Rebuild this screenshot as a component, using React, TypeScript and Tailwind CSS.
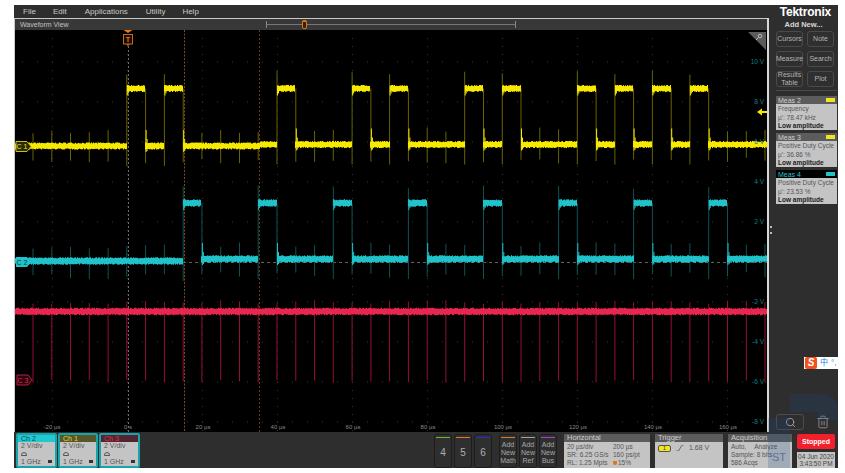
import { Search, Trash2 } from "lucide-react";
import React from "react";

// seeded noise so every render draws the same trace
let seed = 7;
const rnd = () => {
  seed = (seed * 16807) % 2147483647;
  return seed / 2147483647;
};

const X0 = 33;
const STEP = 18.77;
const stepX = (k: number) => X0 + STEP * k;

const buildTrace = (highs: number[], high: number, low: (x: number) => number, fuzz: number) => {
  let bright = "";
  let dim = "";
  const isHigh = (x: number) => highs.some((k) => x >= stepX(k) && x < stepX(k + 1) - 0.5);
  for (let x = 15.5; x < 767; x += 1) {
    const base = isHigh(x) ? high : low(x);
    const up = fuzz + rnd() * 1.2;
    const down = fuzz + rnd() * 1.2;
    bright += `M${x} ${(base - up).toFixed(1)}V${(base + down).toFixed(1)}`;
  }
  for (let k = 0; k < 40; k++) {
    const x = stepX(k);
    if (x > 767) break;
    const wasHigh = highs.includes(k - 1);
    const nowHigh = highs.includes(k);
    if (nowHigh) {
      const top = high - 14 - rnd() * 4;
      dim += `M${x.toFixed(1)} ${top.toFixed(1)}V${(low(x) + 20).toFixed(1)}`;
      bright += `M${(x + 0.5).toFixed(1)} ${(high - 3).toFixed(1)}V${(high + 7).toFixed(1)}M${(x + 1.5).toFixed(1)} ${(high - 3).toFixed(1)}V${(high + 5).toFixed(1)}`;
    } else if (wasHigh) {
      dim += `M${x.toFixed(1)} ${high.toFixed(1)}V${(low(x) + 14 + rnd() * 4).toFixed(1)}`;
      bright += `M${(x + 0.5).toFixed(1)} ${(low(x) - 16).toFixed(1)}V${(low(x) + 6).toFixed(1)}M${(x + 1.5).toFixed(1)} ${(low(x) - 7).toFixed(1)}V${(low(x) + 5).toFixed(1)}`;
    } else {
      const l = low(x);
      dim += `M${x.toFixed(1)} ${(l - 12 - rnd() * 5).toFixed(1)}V${(l + 13 + rnd() * 6).toFixed(1)}`;
    }
  }
  return { bright, dim };
};

const yellow = buildTrace([5, 7, 13, 17, 19, 23, 25, 29, 31, 33, 35], 88.5, (x) => (x < 260 ? 146 : 144.5), 2.4);
const teal = buildTrace([8, 12, 16, 20, 24, 28, 32, 36], 203, (x) => (x < 184 ? 261 : 259), 2.6);

let redBand = "";
for (let x = 15.5; x < 767; x += 1) {
  redBand += `M${x} ${(311.5 - 2.6 - rnd() * 1.2).toFixed(1)}V${(311.5 + 2.6 + rnd() * 1.2).toFixed(1)}`;
}
let redSpikes = "";
for (let k = 0; k < 40; k++) {
  const x = stepX(k);
  if (x < 767) redSpikes += `M${x.toFixed(1)} ${(300 + rnd() * 4).toFixed(1)}V${(380 + rnd() * 3).toFixed(1)}`;
}

let gridDots = "";
for (let y = 62; y < 432; y += 40) {
  for (let x = 22; x < 767; x += 15) gridDots += `M${x} ${y}h1`;
}
for (let x = 52.5; x < 767; x += 75) {
  for (let y = 38; y < 432; y += 8) gridDots += `M${x} ${y}v1`;
}

const yLabels = [
  ["10 V", 64],
  ["8 V", 104],
  ["6 V", 144],
  ["4 V", 184],
  ["2 V", 224],
  ["-2 V", 304],
  ["-4 V", 344],
  ["-6 V", 384],
  ["-8 V", 424],
] as const;

const xLabels = [
  ["-20 µs", 52],
  ["0 s", 128],
  ["20 µs", 203],
  ["40 µs", 278],
  ["60 µs", 353],
  ["80 µs", 428],
  ["100 µs", 503],
  ["120 µs", 578],
  ["140 µs", 653],
  ["160 µs", 728],
] as const;

const Scope = () => (
  <svg viewBox="15 30 752 402" className="block w-[752px] h-[402px] bg-black">
    <path d={gridDots} stroke="#363636" strokeWidth="1" fill="none" />
    <path d="M128.5 46V432" stroke="#6e6e6e" strokeWidth="1" strokeDasharray="2 2" />
    <path d="M184.5 30V432" stroke="#7a4e1c" strokeWidth="1" strokeDasharray="2 1.5" />
    <path d="M259.5 30V432" stroke="#8f5c1c" strokeWidth="0.7" strokeDasharray="2 2" />
    <path d="M15 262.5H767" stroke="#7a7a7a" strokeWidth="0.8" strokeDasharray="3 3" />
    <path d={yellow.dim} stroke="#6a6300" strokeWidth="1" fill="none" />
    <path d={yellow.bright} stroke="#f7ea00" strokeWidth="1" fill="none" />
    <path d={teal.dim} stroke="#0d5256" strokeWidth="1" fill="none" />
    <path d={teal.bright} stroke="#1fc3c9" strokeWidth="1" fill="none" />
    <path d={redSpikes} stroke="#961030" strokeWidth="1" fill="none" />
    <path d={redBand} stroke="#e8264f" strokeWidth="1" fill="none" />
    {yLabels.map(([t, y]) => (
      <text key={t} x="764" y={y} textAnchor="end" fill="#0e7d83" fontSize="6.5" fontFamily="Liberation Sans, sans-serif">
        {t}
      </text>
    ))}
    {xLabels.map(([t, x]) => (
      <text key={t} x={x} y="429" textAnchor="middle" fill="#8a8a8a" fontSize="6" fontFamily="Liberation Sans, sans-serif">
        {t}
      </text>
    ))}
    {/* trigger marker */}
    <path d="M123.5 30h9l-4.5 3z" fill="#e8791c" />
    <rect x="123.5" y="34.5" width="9" height="9.5" fill="#1a0d00" stroke="#c96a18" strokeWidth="1" />
    <text x="128" y="42" textAnchor="middle" fill="#e8791c" fontSize="7" fontWeight="700" fontFamily="Liberation Sans, sans-serif">
      T
    </text>
    <path d="M126 44h4l-2 2z" fill="#c96a18" />
    {/* channel tags */}
    <path d="M16 141.5h11l4 5-4 5H16z" fill="#2a2a05" stroke="#c8bd10" strokeWidth="1" />
    <text x="22" y="149" textAnchor="middle" fill="#f0e520" fontSize="7" fontFamily="Liberation Sans, sans-serif">
      C 1
    </text>
    <path d="M16 257h11l4 5-4 5H16z" fill="#1fc3c9" />
    <text x="22" y="264.5" textAnchor="middle" fill="#0a3a3d" fontSize="7" fontFamily="Liberation Sans, sans-serif">
      C 2
    </text>
    <path d="M17 375h11l4 5-4 5H17z" fill="#2a0710" stroke="#b81f3f" strokeWidth="1" />
    <text x="23" y="382.5" textAnchor="middle" fill="#e8264f" fontSize="7" fontFamily="Liberation Sans, sans-serif">
      C 3
    </text>
    {/* trigger level arrow */}
    <path d="M757 112l5-3.5v2.5h5v2h-5v2.5z" fill="#f7ea00" />
    {/* corner flag with zoom glass */}
    <path d="M748 32h18v18z" fill="#5a5a5a" />
    <circle cx="760" cy="36" r="1.8" fill="none" stroke="#bbb" strokeWidth="1" />
    <path d="M758.5 37.5l-2.5 2.5" stroke="#bbb" strokeWidth="1" />
  </svg>
);

const SideButton = ({ children }: { children: React.ReactNode }) => (
  <div className="w-[27px] h-[16px] flex items-center justify-center text-center bg-[#2f2f2f] border border-[#4a4a4a] rounded-[3px] text-[#b4b4b4] text-[7px] leading-[8px]">
    {children}
  </div>
);

const MeasCard = ({ name, lines, active }: { name: string; lines: string[]; active?: boolean }) => (
  <div className="w-[61px]">
    <div className={`h-[8px] flex items-center justify-between px-[2px] text-[7px] leading-none ${active ? "bg-black text-[#1fc3c9]" : "bg-[#5c5c5c] text-[#d0d0d0]"}`}>
      <span>{name}</span>
      <span className={`w-[9px] h-[4px] ${active ? "bg-[#1fc3c9]" : "bg-[#f0e520]"}`} />
    </div>
    <div className="h-[26px] bg-[#c4c4c4] px-[2px] pt-[1px] text-[6.5px] leading-[8.5px] text-[#555]">
      <div className="whitespace-nowrap">{lines[0]}</div>
      <div className="whitespace-nowrap">{lines[1]}</div>
      <div className="whitespace-nowrap font-bold text-[#222]">Low amplitude</div>
    </div>
  </div>
);

const ChannelCard = ({ name, head, w }: { name: string; head: string; w: string }) => (
  <div className={`${w} h-[35px] border-2 border-[#17a5ad] rounded-[2px] bg-[#c4c4c4] flex flex-col`}>
    <div className={`h-[7px] px-[3px] text-[7px] leading-[7px] ${head}`}>{name}</div>
    <div className="relative flex-1 px-[3px] text-[7px] leading-[8px] text-[#555]">
      <div>2 V/div</div>
      <div className="h-[8px] flex items-center">
        <span className="w-[6px] h-[4px] border border-[#555] rounded-t-full" />
      </div>
      <div>1 GHz</div>
      <span className="absolute right-[3px] bottom-[3px] w-[4px] h-[3px] bg-[#333]" />
    </div>
  </div>
);

const SlotButton = ({ bar, children }: { bar: string; children: React.ReactNode }) => (
  <div className="w-[18px] h-[34px] flex flex-col items-center bg-[#2f2f2f] border border-[#1d1d1d] rounded-[3px]">
    <span className={`mt-[2px] w-[14px] h-[1px] ${bar}`} />
    <div className="flex-1 flex items-center justify-center text-center text-[#a8a8a8] text-[7px] leading-[8px]">{children}</div>
  </div>
);

const InfoBox = ({ title, w, children }: { title: string; w: string; children: React.ReactNode }) => (
  <div className={`${w} h-[34px] flex flex-col`}>
    <div className="h-[8px] px-[3px] bg-[#5c5c5c] text-[#cfcfcf] text-[7.5px] leading-[8px]">{title}</div>
    <div className="flex-1 bg-[#c4c4c4] px-[3px] pt-[1px] text-[6.5px] leading-[8px] text-[#555]">{children}</div>
  </div>
);

export default function App() {
  return (
    <div className="relative w-[845px] h-[473px] overflow-hidden bg-white pt-[5px] pl-[14px] font-['Liberation_Sans',sans-serif]">
      <div className="w-[824px] h-[463px] bg-[#2e2e2e] flex flex-col">
        {/* menu bar */}
        <div className="h-[13px] shrink-0 flex items-center pl-[9px] text-[8px] text-[#c8c8c8] leading-none">
          <span className="mr-[17px]">File</span>
          <span className="mr-[18px]">Edit</span>
          <span className="mr-[18px]">Applications</span>
          <span className="mr-[17px]">Utility</span>
          <span>Help</span>
          <span className="ml-auto mr-[7px] text-white text-[12px] font-bold tracking-[-0.2px]">Tektronix</span>
        </div>

        <div className="flex flex-1 min-h-0">
          {/* waveform view */}
          <div className="w-[755px] shrink-0 border-l border-[#c8c8c8] border-r-2 border-r-[#d8d8d8] border-t border-t-[#c8c8c8] border-b-2 border-b-[#c8c8c8]">
            <div className="relative h-[11px] flex items-center pl-[5px] bg-[#383838] text-[#c0c0c0] text-[7px] leading-none">
              Waveform View
              <div className="absolute left-[251px] top-[2px] w-[250px] h-[7px] border-x border-[#888]">
                <div className="mt-[3px] h-[1px] bg-[#777]" />
                <div className="absolute left-[35px] top-[-1px] w-[5px] h-[9px] bg-[#3a2008] border border-[#d8781c] border-t-2 rounded-[2px]" />
              </div>
            </div>
            <Scope />
          </div>

          {/* right panel */}
          <div className="relative flex-1 flex flex-col pl-[7px]">
            <div className="absolute left-[1px] top-[208px] w-[2px] h-[8px] border-y-2 border-[#bbb]" />
            <div className="h-[13px] flex items-center justify-center pr-[7px] text-[#d8d8d8] text-[7.5px] font-bold leading-none">Add New...</div>
            <div className="grid grid-cols-[27px_27px] gap-x-[4px] gap-y-[4px] self-start">
              <SideButton>Cursors</SideButton>
              <SideButton>Note</SideButton>
              <SideButton>Measure</SideButton>
              <SideButton>Search</SideButton>
              <SideButton>
                Results
                <br />
                Table
              </SideButton>
              <SideButton>Plot</SideButton>
            </div>
            <div className="mt-[3px] mb-[5px] w-[61px] h-[1px] bg-[#4a4a4a]" />
            <div className="flex flex-col gap-[3px]">
              <MeasCard name="Meas 2" lines={["Frequency", "µ': 78.47 kHz"]} />
              <MeasCard name="Meas 3" lines={["Positive Duty Cycle", "µ': 36.86 %"]} />
              <MeasCard name="Meas 4" lines={["Positive Duty Cycle", "µ': 23.53 %"]} active />
            </div>
            <div className="mt-auto mb-[2px] flex items-center gap-[12px]">
              <div className="w-[28px] h-[16px] flex items-center justify-center border border-[#4c4c4c] rounded-[3px]">
                <Search className="w-[11px] h-[11px] text-[#a8a8a8]" />
              </div>
              <Trash2 className="w-[14px] h-[16px] text-[#9a9a9a]" strokeWidth={1.4} />
            </div>
          </div>
        </div>

        {/* bottom bar */}
        <div className="h-[36px] shrink-0 flex items-end pl-[2px]">
          <div className="flex gap-[1px]">
            <ChannelCard name="Ch 2" w="w-[41px]" head="bg-[#22c8d0] text-[#0b4b50]" />
            <ChannelCard name="Ch 1" w="w-[40px]" head="bg-[#56562a] text-[#e8dc20]" />
            <ChannelCard name="Ch 3" w="w-[41px]" head="bg-[#55252f] text-[#e8264f]" />
          </div>
          <div className="ml-[294px] flex gap-[2px]">
            <SlotButton bar="bg-[#6ab82c]"><span className="text-[10px] text-[#b0b0b0]">4</span></SlotButton>
            <SlotButton bar="bg-[#e07a1c]"><span className="text-[10px] text-[#b0b0b0]">5</span></SlotButton>
            <SlotButton bar="bg-[#2a2ad0]"><span className="text-[10px] text-[#b0b0b0]">6</span></SlotButton>
          </div>
          <div className="ml-[7px] flex gap-[2px]">
            <SlotButton bar="bg-[#e07a1c]">Add<br />New<br />Math</SlotButton>
            <SlotButton bar="bg-[#a0a0a0]">Add<br />New<br />Ref</SlotButton>
            <SlotButton bar="bg-[#a040d0]">Add<br />New<br />Bus</SlotButton>
          </div>
          <div className="ml-[7px]">
            <InfoBox title="Horizontal" w="w-[86px]">
              <div className="grid grid-cols-[46px_1fr] whitespace-nowrap">
                <span>20 µs/div</span>
                <span>200 µs</span>
                <span>SR: 6.25 GS/s</span>
                <span>160 ps/pt</span>
                <span>RL: 1.25 Mpts</span>
                <span className="flex items-center gap-[1px]">
                  <span className="w-[4px] h-[4px] bg-[#d8781c] rounded-b-full" />
                  15%
                </span>
              </div>
            </InfoBox>
          </div>
          <div className="ml-[5px]">
            <InfoBox title="Trigger" w="w-[68px]">
              <div className="flex items-center gap-[5px] pt-[1px]">
                <span className="w-[13px] h-[7px] bg-[#f0e520] border border-[#555] rounded-[2px] text-center text-[5px] leading-[5px] text-[#333]">1</span>
                <svg viewBox="0 0 8 6" className="w-[8px] h-[6px]">
                  <path d="M0 6h2.5L6 0h2" fill="none" stroke="#555" strokeWidth="0.8" />
                </svg>
                <span className="text-[7px]">1.68 V</span>
              </div>
            </InfoBox>
          </div>
          <div className="ml-[5px]">
            <InfoBox title="Acquisition" w="w-[64px]">
              <div className="flex gap-[8px] whitespace-nowrap">
                <span>Auto,</span>
                <span>Analyze</span>
              </div>
              <div className="whitespace-nowrap">Sample: 8 bits</div>
              <div>586 Acqs</div>
            </InfoBox>
          </div>
          <div className="ml-[5px] flex flex-col gap-[3px] w-[38px]">
            <div className="h-[15px] flex items-center justify-center bg-[#f2202c] rounded-[2px] text-white text-[7px] font-bold leading-none">Stopped</div>
            <div className="h-[16px] flex flex-col items-center justify-center bg-[#c4c4c4] text-[#444] text-[6.5px] leading-[7.5px] whitespace-nowrap">
              <span>04 Jun 2020</span>
              <span>3:43:50 PM</span>
            </div>
          </div>
        </div>
      </div>

      {/* watermark and input method bar sit over the capture */}
      <svg viewBox="0 0 75 85" className="absolute left-[768px] top-[388px] w-[75px] h-[85px] opacity-20 pointer-events-none">
        <path d="M22 6h30q18 0 18 18v8H50V24H22z" fill="#1c4d8c" />
        <path d="M0 30h22v50H0z" fill="#1c4d8c" />
      </svg>
      <div className="absolute left-[772px] top-[452px] text-[#5d7290] text-[11px] leading-none pointer-events-none whitespace-nowrap">
        ST
      </div>
      <div className="absolute left-[804px] top-[357px] w-[41px] h-[12px] bg-white flex items-center gap-[3px] pl-[1px] text-[8px] leading-none text-[#1b7fd6] font-['Liberation_Sans','Noto_Sans_CJK_SC',sans-serif]">
        <span className="w-[12px] h-[12px] bg-[#f2501c] rounded-[2px] flex items-center justify-center text-white text-[10px] font-bold italic">S</span>
        <span>中</span>
        <span>°,</span>
      </div>
    </div>
  );
}
